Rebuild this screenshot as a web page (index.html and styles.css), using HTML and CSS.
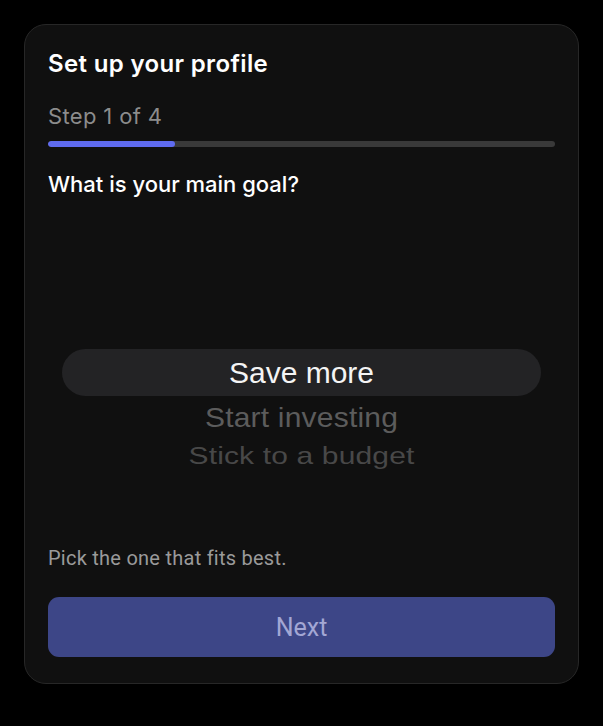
FILE: index.html
```html
<!DOCTYPE html>
<html lang="en">
<head>
<meta charset="utf-8">
<title>Set up your profile</title>
<link rel="stylesheet" href="styles.css">
</head>
<body>
<main class="card">
  <h1 class="title">Set up your profile</h1>
  <div class="step">Step 1 of 4</div>
  <div class="progress"><div class="progress-fill" style="width:25%"></div></div>
  <h2 class="question">What is your main goal?</h2>
  <div class="picker">
    <div class="picker-top"></div>
    <div class="picker-selected">Save more</div>
    <div class="picker-rest">
      <div class="picker-item item-1">Start investing</div>
      <div class="picker-item item-2">Stick to a budget</div>
    </div>
  </div>
  <p class="hint">Pick the one that fits best.</p>
  <button class="next" type="button">Next</button>
</main>
</body>
</html>
```
FILE: styles.css
```css
* { box-sizing: border-box; }
html, body { margin: 0; background: #000; }
body { padding: 24px; height: 726px; }
.card {
  height: 660px;
  background: #101010;
  border: 1px solid #272727;
  border-radius: 22px;
  padding: 24px 23px 26px 23px;
  display: flex;
  flex-direction: column;
  font-family: Inter, "Noto Sans", sans-serif;
  color: #fff;
}
.title {
  margin: 0;
  font-size: 24px;
  font-weight: 600;
  line-height: 29px;
  letter-spacing: 0.35px;
}
.step {
  margin-top: 25px;
  font-size: 22px;
  line-height: 27px;
  letter-spacing: 0.35px;
  color: #8c8c8c;
}
.progress {
  margin-top: 11px;
  height: 6px;
  background: #393939;
  border-radius: 3px;
  overflow: hidden;
}
.progress-fill {
  height: 100%;
  background: #5f6bf0;
  border-radius: 3px;
}
.question {
  margin: 24px 0 0;
  font-size: 22px;
  font-weight: 500;
  line-height: 27px;
}
.picker {
  flex: 1;
  display: grid;
  grid-template-rows: 1fr auto 1fr;
  font-family: "Liberation Sans", Arial, sans-serif;
  font-size: 30px;
  text-align: center;
}
.picker-selected {
  margin: 0 14px;
  height: 47px;
  line-height: 47px;
  background: #232325;
  border-radius: 24px;
  color: #f4f4f4;
}
.picker-item { white-space: nowrap; }
.item-1 {
  height: 43px;
  line-height: 43px;
  color: #5c5c5c;
  letter-spacing: 0.2px;
  transform: scaleY(0.92);
}
.item-2 {
  height: 34px;
  line-height: 34px;
  color: #484848;
  letter-spacing: 0.15px;
  transform: scaleY(0.8);
}
.hint {
  margin: 0;
  font-family: Roboto, "Noto Sans", sans-serif;
  font-size: 20px;
  line-height: 24px;
  letter-spacing: 0.25px;
  color: #9a9a9a;
}
.next {
  margin-top: 27px;
  height: 60px;
  border: 0;
  border-radius: 11px;
  background: #3d4687;
  color: #a3a7d4;
  font-family: Roboto, "Noto Sans", sans-serif;
  font-size: 25px;
  cursor: pointer;
}
```
